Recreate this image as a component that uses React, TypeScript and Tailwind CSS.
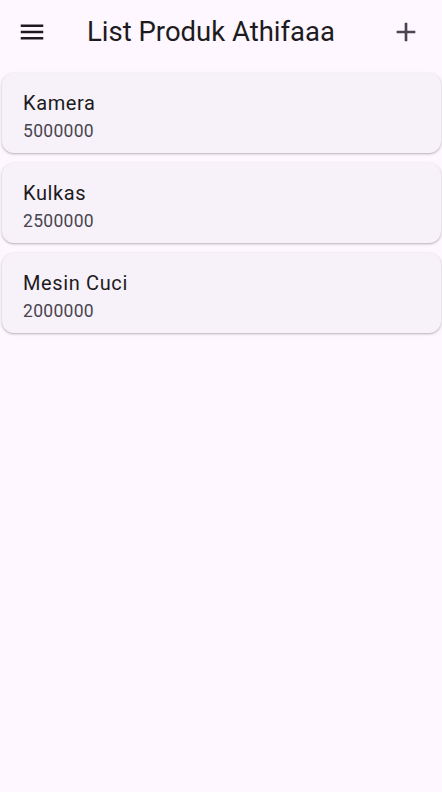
import React from "react";

const items = [
  { name: "Kamera", price: "5000000" },
  { name: "Kulkas", price: "2500000" },
  { name: "Mesin Cuci", price: "2000000" },
];

export default function App() {
  return (
    <div
      className="w-[442px] h-[792px] bg-[#fef7ff] flex flex-col"
      style={{ fontFamily: "Roboto, 'Noto Sans', sans-serif" }}
    >
      <header className="h-[64px] flex items-center shrink-0">
        <div className="ml-[17px] w-[30px] h-[30px] flex items-center justify-center">
          <svg width="30" height="30" viewBox="0 0 24 24" fill="#1d1b20">
            <path d="M3 18h18v-2H3v2zm0-5h18v-2H3v2zm0-7v2h18V6H3z" />
          </svg>
        </div>
        <div className="ml-[40px] flex-1 text-[27.5px] leading-[36px] text-[#1d1b20]">
          List Produk Athifaaa
        </div>
        <div className="mr-[20px] w-[32px] h-[32px] flex items-center justify-center">
          <svg width="32" height="32" viewBox="0 0 24 24" fill="#49454f">
            <path d="M19 13h-6v6h-2v-6H5v-2h6V5h2v6h6v2z" />
          </svg>
        </div>
      </header>
      <div className="flex flex-col gap-[10px] pl-[2px] pr-[1px] pt-[9px]">
        {items.map((it) => (
          <div
            key={it.name}
            className="h-[80px] rounded-[12px] bg-[#f7f2fa] shadow-[0_1px_2px_rgba(0,0,0,0.22),0_1px_3px_1px_rgba(0,0,0,0.06)] flex flex-col pt-[15px] pl-[21px]"
          >
            <div className="text-[20px] leading-[30px] text-[#1d1b20] tracking-[0.625px]">{it.name}</div>
            <div className="text-[17.5px] leading-[25px] text-[#49454f] tracking-[0.31px] mt-[1px]">{it.price}</div>
          </div>
        ))}
      </div>
    </div>
  );
}
